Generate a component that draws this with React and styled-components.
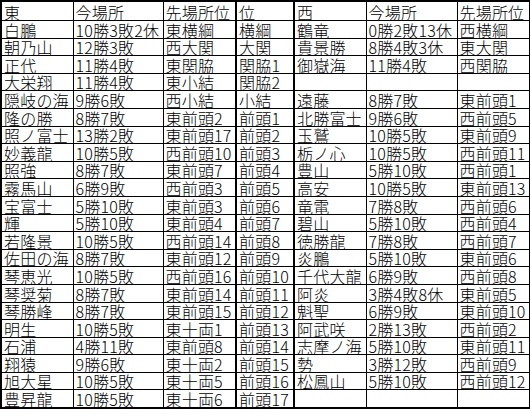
import React from "react";
import styled, { createGlobalStyle } from "styled-components";

const Global = createGlobalStyle`
  html, body { margin: 0; padding: 0; background: #fff; }
  body { font-family: "Noto Sans CJK JP", "Noto Sans", sans-serif; color: #000; }
`;

const Table = styled.table`
  border-collapse: collapse;
  table-layout: fixed;
  width: 529px;
  border: 2px solid #000;
  font-size: 16px;
  line-height: 16px;
`;

const Cell = styled.td`
  border: 1px solid #000;
  border-left-width: ${(p) => (p.$thick ? "2px" : "1px")};
  border-right-width: ${(p) => (p.$thick ? "2px" : "1px")};
  padding: 0 0 0 2px;
  height: ${(p) => (p.$head ? "18px" : "16.6px")};
  vertical-align: bottom;
  white-space: nowrap;
  font-weight: 300;
  text-align: left;
`;

const Text = styled.span`
  display: block;
  height: 16px;
  line-height: 16px;
  letter-spacing: 0.2px;
`;

const widths = [72, 90, 73, 58, 72, 91, 73];
const headers = ["東", "今場所", "先場所位", "位", "西", "今場所", "先場所位"];

const rows = [
  ["白鵬", "10勝3敗2休", "東横綱", "横綱", "鶴竜", "0勝2敗13休", "西横綱"],
  ["朝乃山", "12勝3敗", "西大関", "大関", "貴景勝", "8勝4敗3休", "東大関"],
  ["正代", "11勝4敗", "東関脇", "関脇1", "御嶽海", "11勝4敗", "西関脇"],
  ["大栄翔", "11勝4敗", "東小結", "関脇2", "", "", ""],
  ["隠岐の海", "9勝6敗", "西小結", "小結", "遠藤", "8勝7敗", "東前頭1"],
  ["隆の勝", "8勝7敗", "東前頭2", "前頭1", "北勝富士", "9勝6敗", "西前頭5"],
  ["照ノ富士", "13勝2敗", "東前頭17", "前頭2", "玉鷲", "10勝5敗", "東前頭9"],
  ["妙義龍", "10勝5敗", "西前頭10", "前頭3", "栃ノ心", "10勝5敗", "西前頭11"],
  ["照強", "8勝7敗", "東前頭7", "前頭4", "豊山", "5勝10敗", "西前頭1"],
  ["霧馬山", "6勝9敗", "西前頭3", "前頭5", "高安", "10勝5敗", "東前頭13"],
  ["宝富士", "5勝10敗", "東前頭3", "前頭6", "竜電", "7勝8敗", "西前頭6"],
  ["輝", "5勝10敗", "東前頭4", "前頭7", "碧山", "5勝10敗", "西前頭4"],
  ["若隆景", "10勝5敗", "西前頭14", "前頭8", "徳勝龍", "7勝8敗", "西前頭7"],
  ["佐田の海", "8勝7敗", "東前頭12", "前頭9", "炎鵬", "5勝10敗", "東前頭6"],
  ["琴恵光", "10勝5敗", "西前頭16", "前頭10", "千代大龍", "6勝9敗", "西前頭8"],
  ["琴奨菊", "8勝7敗", "東前頭14", "前頭11", "阿炎", "3勝4敗8休", "東前頭5"],
  ["琴勝峰", "8勝7敗", "東前頭15", "前頭12", "魁聖", "6勝9敗", "東前頭10"],
  ["明生", "10勝5敗", "東十両1", "前頭13", "阿武咲", "2勝13敗", "西前頭2"],
  ["石浦", "4勝11敗", "東前頭8", "前頭14", "志摩ノ海", "5勝10敗", "東前頭11"],
  ["翔猿", "9勝6敗", "東十両2", "前頭15", "勢", "3勝12敗", "西前頭9"],
  ["旭大星", "10勝5敗", "東十両5", "前頭16", "松鳳山", "5勝10敗", "西前頭12"],
  ["豊昇龍", "10勝5敗", "東十両6", "前頭17", "", "", ""],
];

export default function App() {
  return (
    <>
      <Global />
      <Table>
        <colgroup>
          {widths.map((w, i) => (
            <col key={i} style={{ width: w }} />
          ))}
        </colgroup>
        <thead>
          <tr>
            {headers.map((h, i) => (
              <Cell as="th" key={i} $head $thick={i === 3}>
                <Text>{h}</Text>
              </Cell>
            ))}
          </tr>
        </thead>
        <tbody>
          {rows.map((r, ri) => (
            <tr key={ri}>
              {r.map((c, ci) => (
                <Cell key={ci} $thick={ci === 3}>
                  {c && <Text>{c}</Text>}
                </Cell>
              ))}
            </tr>
          ))}
        </tbody>
      </Table>
    </>
  );
}
